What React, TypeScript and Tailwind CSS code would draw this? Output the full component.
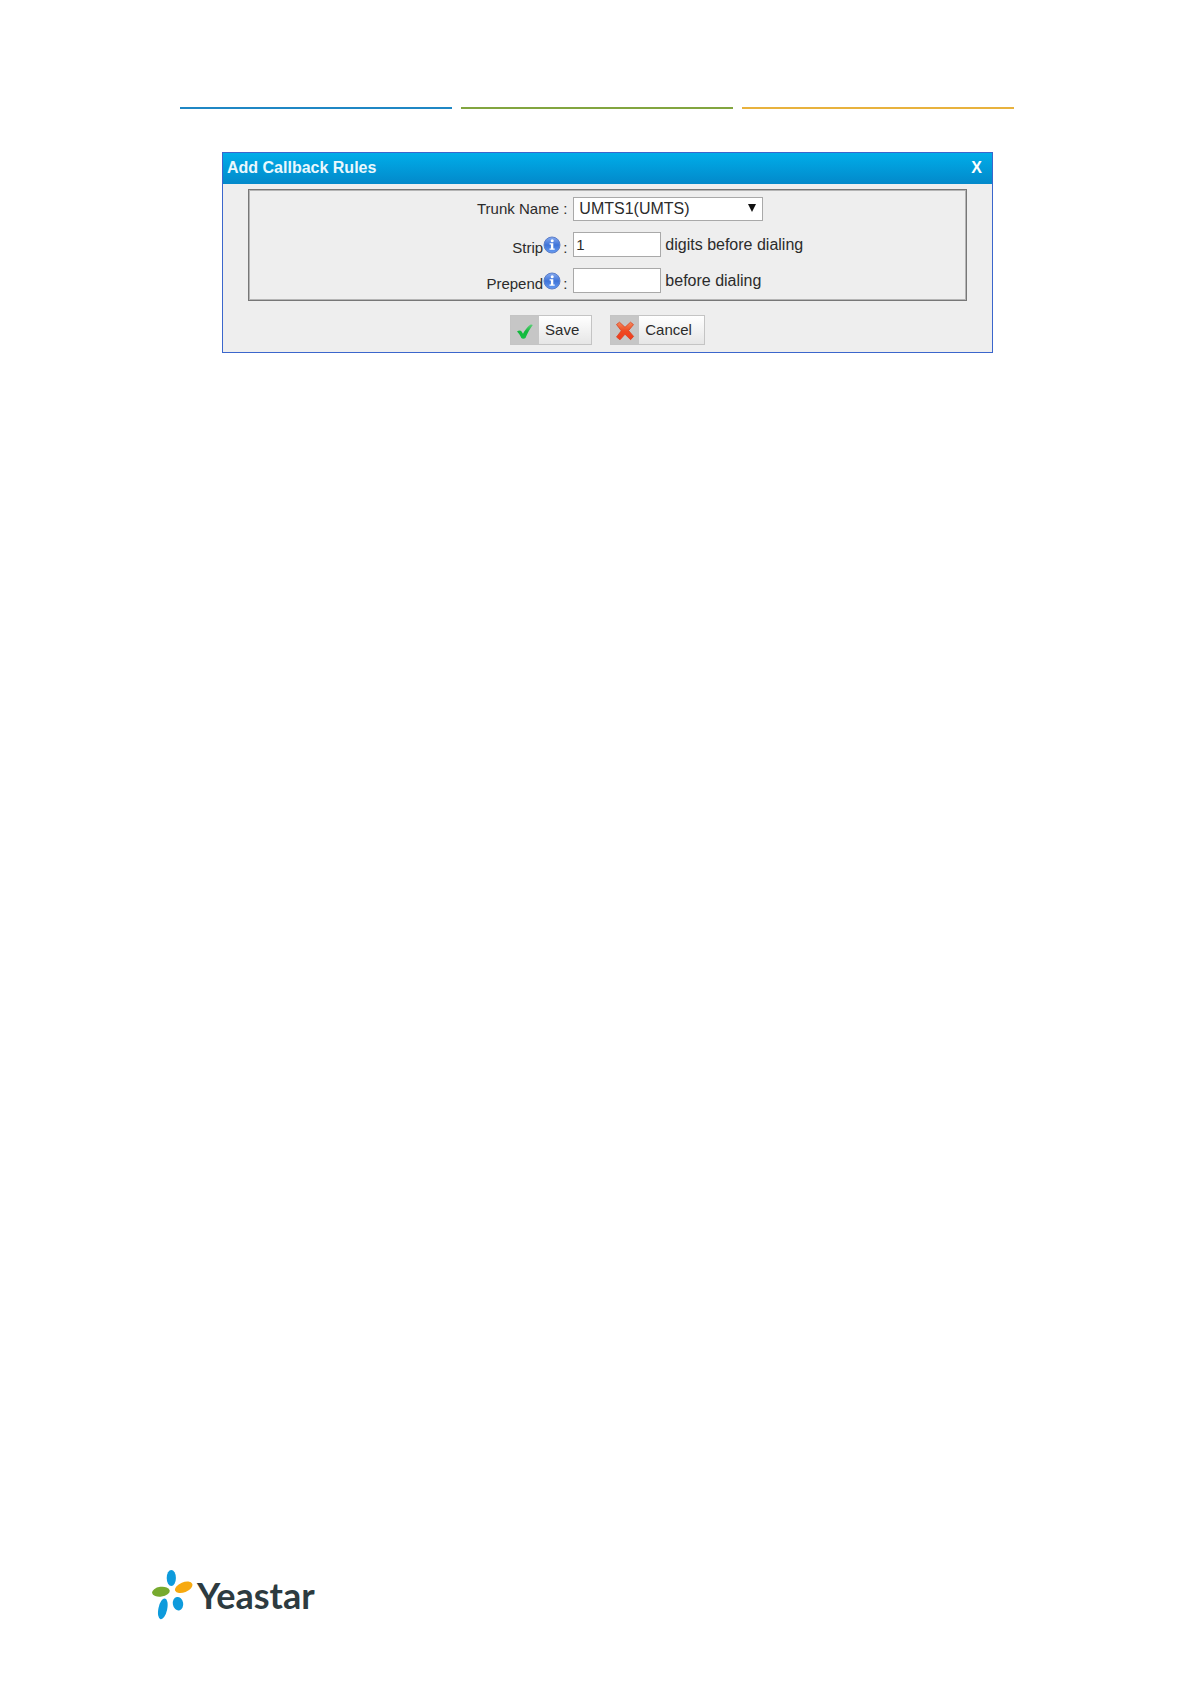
import { useState } from 'react';

function InfoIcon({ id, title }: { id: string; title: string }) {
  return (
    <svg className="mt-1 h-[18px] w-[18px] shrink-0" viewBox="0 0 18 18" role="img" aria-label={title}>
      <defs>
        <linearGradient id={id} x1="0" y1="0" x2="0" y2="1">
          <stop offset="0" stopColor="#86aaf0" />
          <stop offset="0.5" stopColor="#3f74d8" />
          <stop offset="1" stopColor="#659bf2" />
        </linearGradient>
      </defs>
      <circle cx="9" cy="9" r="8" fill={`url(#${id})`} stroke="#5d7fc8" strokeWidth="1" />
      <circle cx="9.2" cy="4.7" r="1.5" fill="#fff" />
      <path d="M6.6 7.3h3.7v5.2h1.4v1.3H6.5v-1.3h1.4V8.600H6.6z" fill="#fff" />
    </svg>
  );
}

function CheckIcon() {
  return (
    <svg className="h-[18px] w-[18px]" viewBox="0 0 18 18" aria-hidden="true">
      <defs>
        <linearGradient id="check" x1="0" y1="0" x2="0" y2="1">
          <stop offset="0" stopColor="#5fd07a" />
          <stop offset="0.5" stopColor="#12b83c" />
          <stop offset="1" stopColor="#16c043" />
        </linearGradient>
      </defs>
      <path
        d="M1 8.600C2.600 7.300 4.700 7.200 5.600 8.600L7 10.800C9 7 11.300 3.800 14.200 1.700c.9-.4 2.300-.2 2.600.4C13.900 5.800 11.500 10.200 9.500 15c-1 .9-3.300.9-4.200.1C4.300 12.600 2.900 10.500 1 8.600z"
        fill="url(#check)"
      />
    </svg>
  );
}

function CrossIcon() {
  return (
    <svg className="h-5 w-5" viewBox="0 0 20 20" aria-hidden="true">
      <defs>
        <linearGradient id="cross" x1="0" y1="0" x2="0" y2="1">
          <stop offset="0" stopColor="#f58a5c" />
          <stop offset="0.5" stopColor="#ee4a22" />
          <stop offset="1" stopColor="#f2391c" />
        </linearGradient>
      </defs>
      <path
        d="M1.500 3.500 4.500 1.200 10 6.300 15.500 1.200 18.500 3.600 13.600 9.600 18.600 15.400 15.600 18.700 10 13.200 5 18.800 1.500 16 6.300 9.800z"
        fill="url(#cross)"
        stroke="#d9401f"
        strokeWidth="0.8"
        strokeLinejoin="round"
      />
    </svg>
  );
}

function YeastarMark() {
  return (
    <svg className="h-[50px] w-[41px]" viewBox="0 0 41 50" aria-hidden="true">
      <ellipse cx="19.300" cy="8" rx="4.600" ry="8" fill="#0e9bdc" />
      <ellipse cx="8.900" cy="21.700" rx="8.900" ry="4.900" transform="rotate(-8 8.900 21.700)" fill="#77aa2e" />
      <ellipse cx="31.700" cy="17.300" rx="9.200" ry="5" transform="rotate(-22 31.700 17.300)" fill="#f7a90f" />
      <ellipse cx="10.800" cy="38.800" rx="4.400" ry="10.600" transform="rotate(12 10.800 38.800)" fill="#0e9bdc" />
      <ellipse cx="26" cy="33.700" rx="5.200" ry="6.800" transform="rotate(-10 26 33.700)" fill="#0e9bdc" />
    </svg>
  );
}

export default function App() {
  const [trunk, setTrunk] = useState('UMTS1(UMTS)');
  const [strip, setStrip] = useState('1');
  const [prepend, setPrepend] = useState('');

  return (
    <div className="flex min-h-screen flex-col bg-white font-['Liberation_Sans',Arial,sans-serif] text-[15px] leading-5 text-[#2b2b2b]">
      <main className="pt-[107px] pr-[177px] pl-[180px]">
        {/* Three-colour page rule */}
        <div className="grid grid-cols-3 gap-[9px]">
          <div className="h-0.5 bg-[#1f87c4]" />
          <div className="h-0.5 bg-[#82a53f]" />
          <div className="h-0.5 bg-[#e8b23e]" />
        </div>

        <section className="mt-[43px] mr-[21px] ml-[42px] border border-[#3b66cc] bg-[#eee]">
          <header className="flex h-[31px] items-center justify-between bg-linear-to-b from-[#00ade9] to-[#0389ca] pr-2.5 pb-0.5 pl-1 text-base leading-5 font-bold text-[#e9f8fd]">
            <h1>Add Callback Rules</h1>
            <button type="button" aria-label="Close" className="text-white">
              X
            </button>
          </header>

          <form className="px-[25px] pt-[5px] pb-[7px]" onSubmit={(e) => e.preventDefault()}>
            <div className="flex flex-col gap-[11px] border border-[#777] py-[7px] pr-px pl-[5px] inset-shadow-[0_0_0_1px_#b5b5b5]">
              <div className="grid grid-cols-[4fr_5fr] items-center gap-1.5">
                <label htmlFor="trunk" className="text-right">
                  Trunk Name :
                </label>
                <div className="relative w-[190px]">
                  <select
                    id="trunk"
                    value={trunk}
                    onChange={(e) => setTrunk(e.target.value)}
                    className="block h-6 w-full appearance-none border border-[#a9a9a9] bg-white px-[5px] text-base leading-5"
                  >
                    <option>UMTS1(UMTS)</option>
                  </select>
                  <svg className="pointer-events-none absolute top-[7px] right-[7px] h-2 w-2" viewBox="0 0 8 8" aria-hidden="true">
                    <path d="M0 0h8L4 8z" fill="#111" />
                  </svg>
                </div>
              </div>

              <div className="grid grid-cols-[4fr_5fr] items-center gap-1.5">
                <div className="flex justify-end leading-[18px]">
                  <label htmlFor="strip" className="pt-[7px]">
                    Strip
                  </label>
                  <InfoIcon id="info-strip" title="Strip help" />
                  <span className="pt-[7px] pl-0.5">:</span>
                </div>
                <div className="flex items-center gap-1">
                  <input
                    id="strip"
                    type="text"
                    value={strip}
                    onChange={(e) => setStrip(e.target.value)}
                    className="h-[25px] w-[88px] border border-[#a9a9a9] bg-white px-0.5"
                  />
                  <span className="text-base leading-5">digits before dialing</span>
                </div>
              </div>

              <div className="grid grid-cols-[4fr_5fr] items-center gap-1.5">
                <div className="flex justify-end leading-[18px]">
                  <label htmlFor="prepend" className="pt-[7px]">
                    Prepend
                  </label>
                  <InfoIcon id="info-prepend" title="Prepend help" />
                  <span className="pt-[7px] pl-0.5">:</span>
                </div>
                <div className="flex items-center gap-1">
                  <input
                    id="prepend"
                    type="text"
                    value={prepend}
                    onChange={(e) => setPrepend(e.target.value)}
                    className="h-[25px] w-[88px] border border-[#a9a9a9] bg-white px-0.5"
                  />
                  <span className="text-base leading-5">before dialing</span>
                </div>
              </div>
            </div>

            <div className="mt-3.5 flex justify-center gap-[18px]">
              <button
                type="submit"
                className="flex h-[30px] items-stretch border border-[#c4c4c4] bg-linear-to-b from-white to-[#e6e6e6]"
              >
                <span className="flex w-7 items-center justify-center bg-[#c6c6c6] pt-1">
                  <CheckIcon />
                </span>
                <span className="self-center pr-3 pl-1.5">Save</span>
              </button>
              <button
                type="button"
                className="flex h-[30px] items-stretch border border-[#c4c4c4] bg-linear-to-b from-white to-[#e6e6e6]"
              >
                <span className="flex w-7 items-center justify-center bg-[#c6c6c6] pt-0.5">
                  <CrossIcon />
                </span>
                <span className="self-center pr-3 pl-1.5">Cancel</span>
              </button>
            </div>
          </form>
        </section>
      </main>

      <footer className="mt-auto flex items-center gap-1 pb-16 pl-[152px]">
        <YeastarMark />
        <span className="font-['Lato',sans-serif] text-4xl font-bold text-[#2d3b40]">Yeastar</span>
      </footer>
    </div>
  );
}
